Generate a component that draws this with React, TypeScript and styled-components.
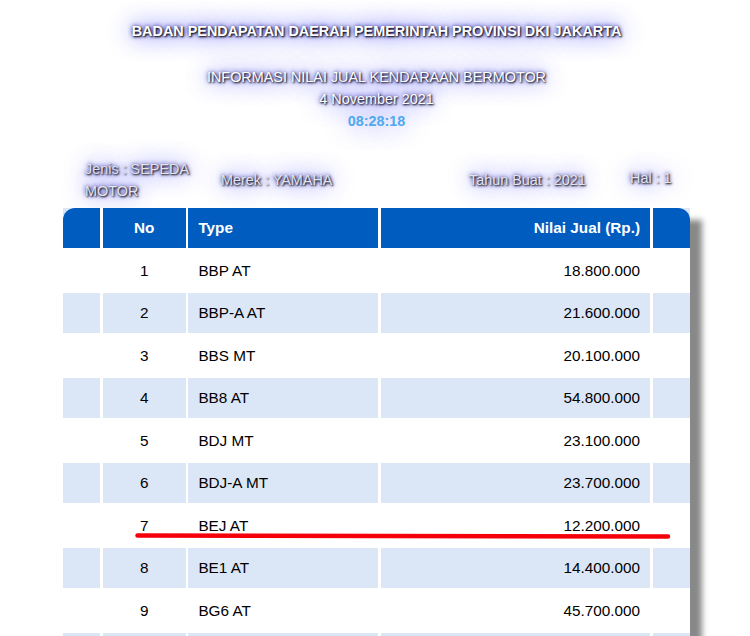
import React from 'react'
import styled, { createGlobalStyle } from 'styled-components'

type Row = {
  no: number
  type: string
  price: string
}

const rows: Row[] = [
  { no: 1, type: 'BBP AT', price: '18.800.000' },
  { no: 2, type: 'BBP-A AT', price: '21.600.000' },
  { no: 3, type: 'BBS MT', price: '20.100.000' },
  { no: 4, type: 'BB8 AT', price: '54.800.000' },
  { no: 5, type: 'BDJ MT', price: '23.100.000' },
  { no: 6, type: 'BDJ-A MT', price: '23.700.000' },
  { no: 7, type: 'BEJ AT', price: '12.200.000' },
  { no: 8, type: 'BE1 AT', price: '14.400.000' },
  { no: 9, type: 'BG6 AT', price: '45.700.000' },
]

const App: React.FC = () => {
  return (
    <>
      <GlobalStyle />
      <Page>
        <Title>BADAN PENDAPATAN DAERAH PEMERINTAH PROVINSI DKI JAKARTA</Title>
        <Sub>
          <Line>INFORMASI NILAI JUAL KENDARAAN BERMOTOR</Line>
          <Line>4 November 2021</Line>
          <Line $clock>08:28:18</Line>
        </Sub>

        <Info>
          <InfoItem>Jenis : SEPEDA MOTOR</InfoItem>
          <InfoItem>Merek : YAMAHA</InfoItem>
          <InfoItem>Tahun Buat : 2021</InfoItem>
          <InfoItem $lift>Hal : 1</InfoItem>
        </Info>

        <Table>
          <Corner>
            <HeadCell $round="left" />
          </Corner>
          <HeadCell $align="center">No</HeadCell>
          <HeadCell>Type</HeadCell>
          <HeadCell $align="right">Nilai Jual (Rp.)</HeadCell>
          <Corner>
            <HeadCell $round="right" />
          </Corner>

          {rows.map((row) => {
            const shade = row.no % 2 === 0
            return (
              <React.Fragment key={row.no}>
                <Cell $shade={shade} />
                <Cell $shade={shade} $align="center">
                  {row.no}
                </Cell>
                <Cell $shade={shade}>{row.type}</Cell>
                <Cell $shade={shade} $align="right">
                  {row.price}
                </Cell>
                <Cell $shade={shade} />
              </React.Fragment>
            )
          })}

          {/* next row, only its top edge shows in the frame */}
          {[0, 1, 2, 3, 4].map((i) => (
            <Cell key={`tail-${i}`} $shade />
          ))}

          <Marker width="536" height="8" viewBox="0 0 536 8">
            <line
              x1="2.5"
              y1="3.5"
              x2="533"
              y2="4.5"
              stroke="#f5000a"
              strokeWidth="4.5"
              strokeLinecap="round"
            />
          </Marker>
        </Table>
      </Page>
    </>
  )
}

const GlobalStyle = createGlobalStyle`
  body {
    margin: 0;
    background: #ffffff;
    font-family: "Liberation Sans", Arial, sans-serif;
  }
`

const Glow = `
  color: #ffffff;
  text-shadow: 1px 1px 2px #000000, 0 0 25px #0000ff, 0 0 5px #00008b;
`

const Page = styled.div`
  width: 750px;
  padding: 21px 0 40px;
`

const Title = styled.h1`
  margin: 0;
  padding-left: 3px;
  font-size: 14.4px;
  font-weight: bold;
  line-height: 20px;
  text-align: center;
  ${Glow}
`

const Sub = styled.div`
  margin-top: 25px;
  padding-left: 3px;
  text-align: center;
  font-size: 14.4px;
  line-height: 22px;
`

const Line = styled.div<{ $clock?: boolean }>`
  ${(p) =>
    p.$clock
      ? `
    color: #4fa9ec;
    font-weight: bold;
    text-shadow: 0 0 25px rgba(0, 0, 255, 0.55);
  `
      : Glow}
`

const Info = styled.div`
  display: grid;
  grid-template-columns: 136px 248px 161px 1fr;
  align-items: center;
  margin-top: 27px;
  padding-left: 85px;
  font-size: 14.4px;
  line-height: 21.5px;
`

const InfoItem = styled.div<{ $lift?: boolean }>`
  ${Glow}
  color: #e4e4ea;
  margin-bottom: ${(p) => (p.$lift ? '4px' : '0')};
`

const Table = styled.div`
  position: relative;
  display: grid;
  grid-template-columns: 37px 83px 189.5px 269.5px 37px;
  grid-auto-rows: 40px;
  column-gap: 2.7px;
  row-gap: 2.5px;
  width: max-content;
  margin: 6px 0 0 63px;
  background: #ffffff;
  box-shadow: 12px 12px 6px #888888;
`

type Align = 'left' | 'center' | 'right'

const justify = (a?: Align) =>
  a === 'center' ? 'center' : a === 'right' ? 'flex-end' : 'flex-start'

const Corner = styled.div`
  background: #dbe7f7;
`

const HeadCell = styled.div<{ $align?: Align; $round?: 'left' | 'right' }>`
  display: flex;
  align-items: center;
  justify-content: ${(p) => justify(p.$align)};
  height: 100%;
  padding: 0 10px;
  box-sizing: border-box;
  background: #005dbf;
  color: #ffffff;
  font-size: 15.3px;
  font-weight: bold;
  border-top-left-radius: ${(p) => (p.$round === 'left' ? '12px' : '0')};
  border-top-right-radius: ${(p) => (p.$round === 'right' ? '12px' : '0')};
`

const Cell = styled.div<{ $shade: boolean; $align?: Align }>`
  display: flex;
  align-items: center;
  justify-content: ${(p) => justify(p.$align)};
  padding: 0 10px;
  background: ${(p) => (p.$shade ? '#dbe7f7' : '#ffffff')};
  color: #000000;
  font-size: 15.3px;
`

const Marker = styled.svg`
  position: absolute;
  left: 72px;
  top: 324px;
  pointer-events: none;
`

export default App
